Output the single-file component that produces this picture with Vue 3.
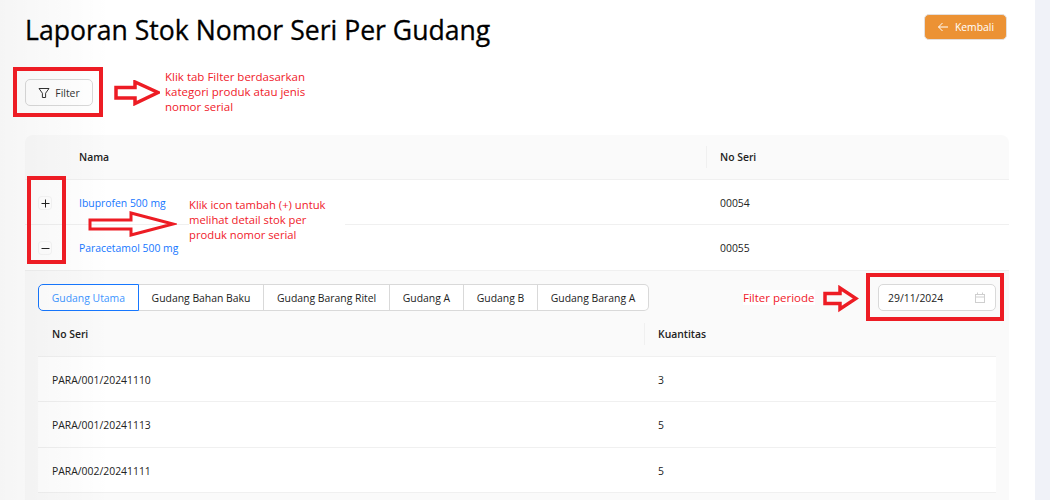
<template>
  <div class="page">
    <main class="content">
      <header class="top">
        <h1 class="title">Laporan Stok Nomor Seri Per Gudang</h1>
        <button class="back-btn">
          <svg width="12" height="12" viewBox="0 0 12 12" fill="none" stroke="currentColor" stroke-width="1"><path d="M11 6H1.5M5.5 2 1.5 6l4 4" /></svg>
          Kembali
        </button>
      </header>

      <button class="filter-btn">
        <svg width="12" height="12" viewBox="0 0 12 12" fill="none" stroke="currentColor" stroke-width="1"><path d="M1 1.5h10L7.6 6.2v4.3H4.4V6.2z" /></svg>
        Filter
      </button>

      <section class="table">
        <div class="row head">
          <div></div>
          <div class="cell">Nama</div>
          <div class="cell sep">No Seri</div>
        </div>
        <div v-for="item in products" :key="item.serial" class="row">
          <div class="expand">
            <span class="toggle">
              <svg width="9" height="9" viewBox="0 0 9 9" fill="none" stroke="#222" stroke-width="1">
                <path d="M.5 4.5h8" />
                <path v-if="!item.open" d="M4.5 .5v8" />
              </svg>
            </span>
          </div>
          <div class="cell link">{{ item.name }}</div>
          <div class="cell">{{ item.serial }}</div>
        </div>

        <div class="detail">
          <div class="toolbar">
            <div class="tabs">
              <span v-for="(tab, idx) in tabs" :key="tab" :class="['tab', { active: idx === 0 }]">{{ tab }}</span>
            </div>
            <div class="date">
              <span>29/11/2024</span>
              <svg width="12" height="12" viewBox="0 0 12 12" fill="none" stroke="#cfcfcf" stroke-width="1"><rect x="1.5" y="2.5" width="9" height="8" /><path d="M1.5 5h9M3.5 .5v2.5M8.5 .5v2.5" /></svg>
            </div>
          </div>
          <div class="subrow subhead">
            <div class="cell sub-first">No Seri</div>
            <div class="cell sep">Kuantitas</div>
          </div>
          <div v-for="stock in stocks" :key="stock.serial" class="subrow">
            <div class="cell sub-first">{{ stock.serial }}</div>
            <div class="cell">{{ stock.qty }}</div>
          </div>
        </div>
      </section>

      <!-- annotations on top of the screenshot -->
      <div class="shade"></div>
      <div class="mark mark-filter"></div>
      <div class="mark mark-expand"></div>
      <div class="mark mark-date"></div>

      <svg class="arrow arrow-filter" width="46" height="26" viewBox="0 0 46 26" fill="none" stroke="#ed1c24" stroke-width="3.5"><path d="M2 7.5h19V2l23 10.5L21 23.5V18H2z" /></svg>
      <svg class="arrow arrow-expand" width="90" height="26" viewBox="0 0 90 26" fill="none" stroke="#ed1c24" stroke-width="3"><path d="M3 9h41V2l42 11-42 11v-6H3z" /></svg>
      <svg class="arrow arrow-date" width="36" height="28" viewBox="0 0 36 28" fill="none" stroke="#ed1c24" stroke-width="3.5"><path d="M2 8.5h15V3l16 10.5L17 24v-5.5H2z" /></svg>

      <p class="note note-filter">Klik tab Filter berdasarkan<br />kategori produk atau jenis<br />nomor serial</p>
      <p class="note note-expand">Klik icon tambah (+) untuk<br />melihat detail stok per<br />produk nomor serial</p>
      <p class="note note-date">Filter periode</p>
    </main>
    <aside class="strip"></aside>
  </div>
</template>

<script setup>
const products = [
  { name: 'Ibuprofen 500 mg', serial: '00054', open: false },
  { name: 'Paracetamol 500 mg', serial: '00055', open: true },
]
const tabs = ['Gudang Utama', 'Gudang Bahan Baku', 'Gudang Barang Ritel', 'Gudang A', 'Gudang B', 'Gudang Barang A']
const stocks = [
  { serial: 'PARA/001/20241110', qty: 3 },
  { serial: 'PARA/001/20241113', qty: 5 },
  { serial: 'PARA/002/20241111', qty: 5 },
]
</script>

<style>
html, body {
  margin: 0;
  height: 500px;
  overflow: hidden;
}
</style>

<style scoped>
.page {
  display: flex;
  height: 500px;
  overflow: hidden;
  font-family: "Open Sans", "Noto Sans", sans-serif;
  font-size: 10.4px;
  color: #222;
  background: #fff;
}
.content {
  position: relative;
  width: 1035px;
  flex: none;
  box-sizing: border-box;
  padding: 14px 26px 0 25px;
}
.strip {
  flex: 1;
  background: #f0f2f8;
}
.top {
  display: flex;
  justify-content: space-between;
  align-items: flex-start;
  margin-right: 2px;
}
.title {
  margin: -1px 0 1px;
  font-size: 26.6px;
  line-height: 34px;
  font-weight: 500;
  color: #000;
  -webkit-text-stroke: 0.3px #000;
}
.back-btn {
  display: flex;
  align-items: center;
  justify-content: center;
  gap: 6px;
  width: 83px;
  height: 26px;
  border: 1px solid #e4dfdc;
  border-radius: 5px;
  background: #ec9234;
  color: #fff;
  font: inherit;
}
.filter-btn {
  display: flex;
  align-items: center;
  justify-content: center;
  gap: 5px;
  width: 68px;
  height: 27px;
  margin-top: 31px;
  border: 1px solid #d9d9d9;
  border-radius: 5px;
  background: #fff;
  color: #333;
  font: inherit;
}
.table {
  margin-top: 28.6px;
  width: 984px;
}
.row {
  display: grid;
  grid-template-columns: 40px 641px 1fr;
  height: 45.33px;
  align-items: center;
  border-bottom: 1px solid #f0f0f0;
  box-sizing: border-box;
}
.row.head {
  background: #fafafa;
  border-radius: 8px 8px 0 0;
  font-weight: 600;
  color: #222;
}
.cell {
  position: relative;
  padding: 2px 0 0 14px;
}
.head .cell,
.subhead .cell {
  padding-top: 0;
}
.sep::before {
  content: "";
  position: absolute;
  left: 0;
  top: -4px;
  bottom: -4px;
  width: 1px;
  background: #f0f0f0;
}
.link {
  color: #1677ff;
}
.expand {
  display: flex;
  justify-content: center;
  padding-top: 2px;
}
.toggle {
  width: 12px;
  height: 12px;
  display: flex;
  align-items: center;
  justify-content: center;
  border-radius: 3px;
  box-shadow: 0 0 0 1px #f5f5f5;
  background: #fff;
}
.detail {
  background: #fafafa;
  padding: 13.4px 13px 10px;
  height: 232px;
  box-sizing: border-box;
}
.toolbar {
  display: flex;
  justify-content: space-between;
  align-items: flex-start;
  margin-bottom: 0.7px;
}
.tabs {
  display: flex;
  height: 27px;
  border-radius: 6px;
}
.tab {
  display: flex;
  align-items: center;
  padding: 2px 12.8px 0;
  background: #fff;
  border: 1px solid #d9d9d9;
  border-left: 0;
}
.tab:first-child {
  border-left: 1px solid #1677ff;
  border-radius: 5px 0 0 5px;
}
.tab:last-child {
  border-radius: 0 5px 5px 0;
}
.tab.active {
  color: #4096ff;
  border-color: #1677ff;
  border-right: 1px solid #1677ff;
}
.date {
  display: flex;
  align-items: center;
  justify-content: space-between;
  width: 118px;
  height: 27px;
  box-sizing: border-box;
  padding: 2px 9px 0;
  border: 1px solid #d9d9d9;
  border-radius: 5px;
  background: #fff;
  color: #222;
}
.subrow {
  display: grid;
  grid-template-columns: 606px 1fr;
  height: 45.33px;
  align-items: center;
  background: #fff;
  border-bottom: 1px solid #f0f0f0;
  box-sizing: border-box;
}
.subrow.subhead {
  background: #fafafa;
  font-weight: 600;
}
.sub-first {
  padding-left: 14px;
}
.shade {
  position: absolute;
  inset: 0 auto 0 0;
  width: 110px;
  background: linear-gradient(to right, rgba(0, 0, 0, 0.04), rgba(0, 0, 0, 0));
  pointer-events: none;
}
.mark {
  position: absolute;
  box-sizing: border-box;
  border: 4px solid #ed1c24;
}
.mark-filter {
  left: 13px;
  top: 67px;
  width: 90px;
  height: 50px;
}
.mark-expand {
  left: 27px;
  top: 176px;
  width: 39px;
  height: 88px;
}
.mark-date {
  left: 866px;
  top: 273px;
  width: 138px;
  height: 48px;
}
.arrow {
  position: absolute;
}
.arrow-filter {
  left: 114px;
  top: 80px;
}
.arrow-expand {
  left: 87px;
  top: 211px;
}
.arrow-date {
  left: 823px;
  top: 285px;
}
.note {
  position: absolute;
  margin: 0;
  font-size: 11.5px;
  line-height: 15px;
  color: #f0202a;
  background: #fff;
}
.note-filter {
  left: 165px;
  top: 69px;
}
.note-expand {
  left: 189px;
  top: 197px;
  padding-right: 20px;
  font-size: 11.25px;
}
.note-date {
  left: 743px;
  top: 290px;
}
</style>
